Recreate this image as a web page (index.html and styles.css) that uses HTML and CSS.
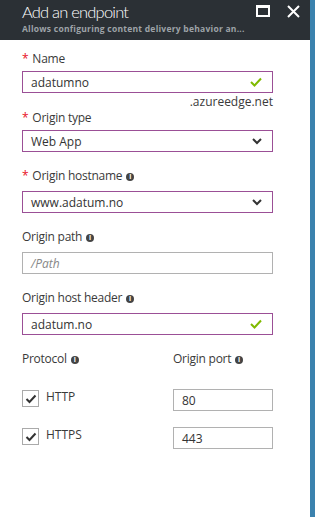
FILE: index.html
```html
<!DOCTYPE html>
<html lang="en">
<head>
  <meta charset="UTF-8">
  <title>Add an endpoint</title>
  <link rel="stylesheet" href="styles.css">
</head>
<body>
  <div class="blade">
    <header class="blade-head">
      <div class="head-text">
        <h1>Add an endpoint</h1>
        <p>Allows configuring content delivery behavior an...</p>
      </div>
      <div class="head-actions">
        <svg class="icon-max" width="14" height="12" viewBox="0 0 14 12"><rect x="1" y="1.5" width="12" height="9.5" fill="none" stroke="#fff" stroke-width="2"/><rect x="0" y="0" width="14" height="3" fill="#fff"/></svg>
        <svg class="icon-close" width="13" height="13" viewBox="0 0 13 13"><path d="M1 1 L12 12 M12 1 L1 12" stroke="#fff" stroke-width="2"/></svg>
      </div>
    </header>

    <form class="blade-body">
      <div class="field">
        <label class="req">Name</label>
        <div class="box ok">
          <span class="val">adatumno</span>
          <svg class="check" width="12" height="10" viewBox="0 0 12 10"><path d="M1 5 L4.5 8.5 L11 1.5" fill="none" stroke="#7fba00" stroke-width="2"/></svg>
        </div>
        <div class="suffix">.azureedge.net</div>
      </div>

      <div class="field">
        <label class="req">Origin type</label>
        <div class="box ok">
          <span class="val">Web App</span>
          <svg class="chev" width="10" height="7" viewBox="0 0 10 7"><path d="M1 1 L5 5 L9 1" fill="none" stroke="#333" stroke-width="2"/></svg>
        </div>
      </div>

      <div class="field">
        <label class="req info">Origin hostname <i class="i">i</i></label>
        <div class="box ok">
          <span class="val">www.adatum.no</span>
          <svg class="chev" width="10" height="7" viewBox="0 0 10 7"><path d="M1 1 L5 5 L9 1" fill="none" stroke="#333" stroke-width="2"/></svg>
        </div>
      </div>

      <div class="field">
        <label class="info">Origin path <i class="i">i</i></label>
        <div class="box">
          <span class="val ph">/Path</span>
        </div>
      </div>

      <div class="field">
        <label class="info">Origin host header <i class="i">i</i></label>
        <div class="box ok">
          <span class="val">adatum.no</span>
          <svg class="check" width="12" height="10" viewBox="0 0 12 10"><path d="M1 5 L4.5 8.5 L11 1.5" fill="none" stroke="#7fba00" stroke-width="2"/></svg>
        </div>
      </div>

      <div class="proto">
        <div class="proto-col">
          <label class="info">Protocol <i class="i">i</i></label>
          <div class="cb-row">
            <span class="cb"><svg width="12" height="10" viewBox="0 0 12 10"><path d="M1.5 5 L4.5 8 L10.5 1.5" fill="none" stroke="#333" stroke-width="2"/></svg></span>
            <span class="cb-label">HTTP</span>
          </div>
          <div class="cb-row">
            <span class="cb"><svg width="12" height="10" viewBox="0 0 12 10"><path d="M1.5 5 L4.5 8 L10.5 1.5" fill="none" stroke="#333" stroke-width="2"/></svg></span>
            <span class="cb-label">HTTPS</span>
          </div>
        </div>
        <div class="port-col">
          <label class="info">Origin port <i class="i">i</i></label>
          <div class="box port"><span class="val">80</span></div>
          <div class="box port"><span class="val">443</span></div>
        </div>
      </div>
    </form>
  </div>
  <div class="edge"></div>
</body>
</html>
```

FILE: styles.css
```css
body {
  margin: 0;
  display: flex;
  height: 517px;
  font-family: "Open Sans", "Noto Sans", sans-serif;
  color: #3a3a3a;
  background: #fff;
}
.blade {
  width: 310px;
}
.edge {
  width: 5px;
  background: #3b82ae;
}
.blade-head {
  height: 40px;
  background: #2b3035;
  display: flex;
  justify-content: space-between;
  padding-left: 22px;
  box-sizing: border-box;
}
.head-text h1 {
  margin: 0;
  padding-top: 1px;
  font-family: Lato, "Open Sans", sans-serif;
  font-size: 16.5px;
  font-weight: 300;
  letter-spacing: -0.8px;
  line-height: 22px;
  color: #fff;
}
.head-text p {
  margin: 0;
  font-size: 8.5px;
  font-weight: 700;
  letter-spacing: 0.25px;
  line-height: 12px;
  color: #9ea3a8;
}
.head-actions {
  display: flex;
  align-items: flex-start;
  padding-top: 5px;
  padding-right: 10px;
}
.icon-max {
  margin-right: 17px;
}
.blade-body {
  padding: 11px 37px 0 22px;
}
.field {
  margin-bottom: 16px;
}
label {
  display: block;
  font-size: 12px;
  line-height: 16px;
  letter-spacing: -0.25px;
  margin-bottom: 4px;
}
label.info {
  margin-bottom: 7px;
}
label.req::before {
  content: "*";
  color: #e81123;
  margin-right: 4px;
}
.i {
  display: inline-block;
  width: 8px;
  height: 8px;
  border-radius: 50%;
  background: #444;
  color: #fff;
  font-size: 7px;
  font-style: normal;
  font-weight: 700;
  line-height: 8px;
  letter-spacing: 0;
  text-align: center;
  vertical-align: 1px;
  margin-left: 1px;
}
.box {
  height: 22px;
  box-sizing: border-box;
  border: 1px solid #b1b1b1;
  display: flex;
  align-items: center;
  justify-content: space-between;
  padding: 0 10px 0 8px;
}
.box.ok {
  border-color: #9b4f96;
}
.val {
  font-size: 12px;
  color: #333;
}
.val.ph {
  font-style: italic;
  color: #888;
}
.suffix {
  text-align: right;
  font-size: 12px;
  line-height: 14px;
  margin-top: 2px;
  margin-bottom: -15px;
}
.proto {
  display: flex;
}
.proto-col {
  width: 151px;
}
.port-col {
  flex: 1;
}
.proto label {
  margin-bottom: 0;
}
.cb-row {
  display: flex;
  align-items: flex-start;
  margin-top: 23px;
  height: 17px;
}
.cb-row + .cb-row {
  margin-top: 21px;
}
.cb {
  width: 17px;
  height: 17px;
  box-sizing: border-box;
  border: 1px solid #aaa;
  display: flex;
  align-items: center;
  justify-content: center;
}
.cb-label {
  font-size: 12px;
  line-height: 16px;
  margin-top: -1px;
  margin-left: 7px;
}
.box.port {
  margin-top: 22px;
  padding-left: 8px;
}
.box.port + .box.port {
  margin-top: 16px;
}
```
